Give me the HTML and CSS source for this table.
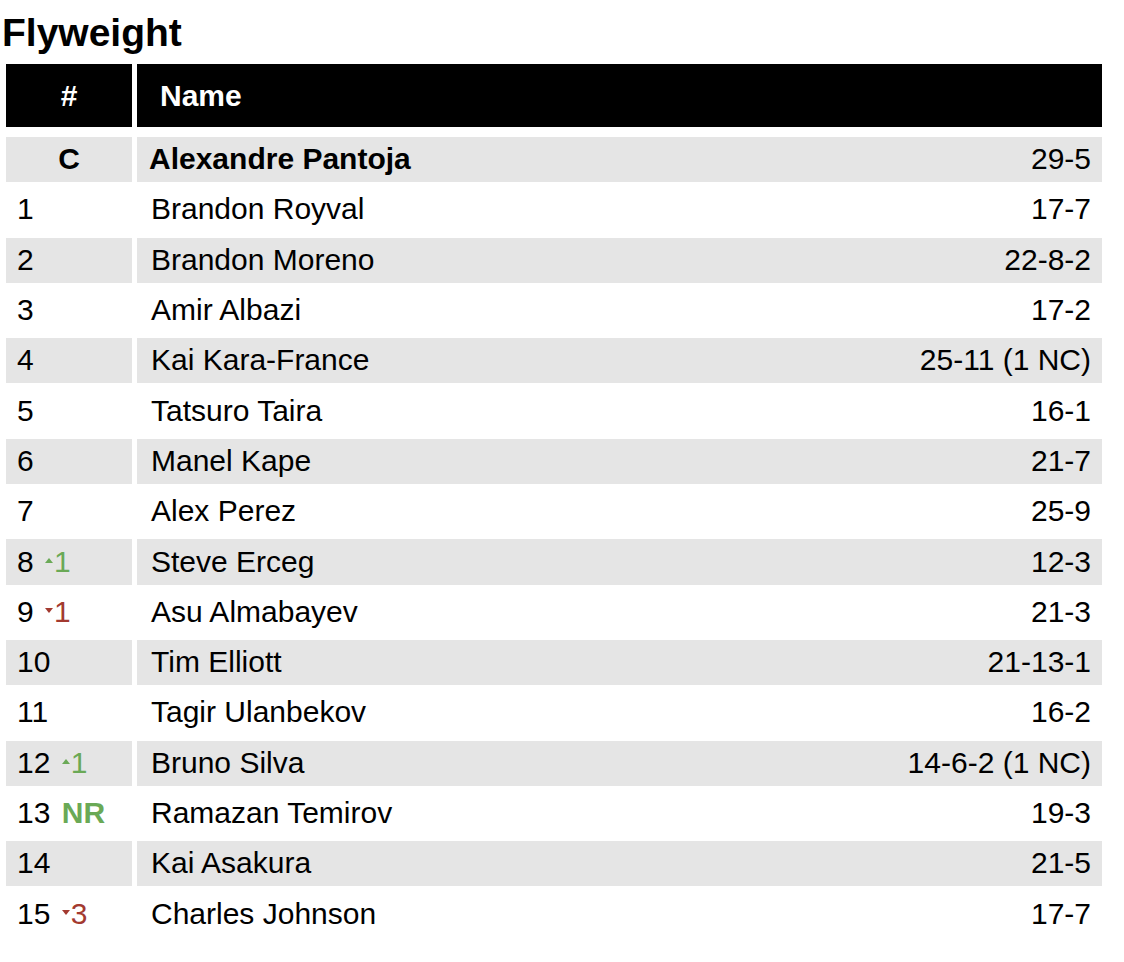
FILE: index.html
```html
<!DOCTYPE html>
<html lang="en">
<head>
<meta charset="utf-8">
<title>Flyweight</title>
<link rel="stylesheet" href="styles.css">
</head>
<body>
<h2 class="title">Flyweight</h2>
<table class="rank">
  <thead>
    <tr><th class="c-rank">#</th><th class="c-name">Name</th></tr>
  </thead>
  <tbody>
    <tr class="odd champ"><td class="c-rank">C</td><td class="c-name"><div class="nr"><span>Alexandre Pantoja</span><span class="rec">29-5</span></div></td></tr>
    <tr><td class="c-rank">1</td><td class="c-name"><div class="nr"><span>Brandon Royval</span><span class="rec">17-7</span></div></td></tr>
    <tr class="odd"><td class="c-rank">2</td><td class="c-name"><div class="nr"><span>Brandon Moreno</span><span class="rec">22-8-2</span></div></td></tr>
    <tr><td class="c-rank">3</td><td class="c-name"><div class="nr"><span>Amir Albazi</span><span class="rec">17-2</span></div></td></tr>
    <tr class="odd"><td class="c-rank">4</td><td class="c-name"><div class="nr"><span>Kai Kara-France</span><span class="rec">25-11 (1 NC)</span></div></td></tr>
    <tr><td class="c-rank">5</td><td class="c-name"><div class="nr"><span>Tatsuro Taira</span><span class="rec">16-1</span></div></td></tr>
    <tr class="odd"><td class="c-rank">6</td><td class="c-name"><div class="nr"><span>Manel Kape</span><span class="rec">21-7</span></div></td></tr>
    <tr><td class="c-rank">7</td><td class="c-name"><div class="nr"><span>Alex Perez</span><span class="rec">25-9</span></div></td></tr>
    <tr class="odd"><td class="c-rank">8 <span class="mv up"><span class="tri"></span>1</span></td><td class="c-name"><div class="nr"><span>Steve Erceg</span><span class="rec">12-3</span></div></td></tr>
    <tr><td class="c-rank">9 <span class="mv down"><span class="tri"></span>1</span></td><td class="c-name"><div class="nr"><span>Asu Almabayev</span><span class="rec">21-3</span></div></td></tr>
    <tr class="odd"><td class="c-rank">10</td><td class="c-name"><div class="nr"><span>Tim Elliott</span><span class="rec">21-13-1</span></div></td></tr>
    <tr><td class="c-rank">11</td><td class="c-name"><div class="nr"><span>Tagir Ulanbekov</span><span class="rec">16-2</span></div></td></tr>
    <tr class="odd"><td class="c-rank">12 <span class="mv up"><span class="tri"></span>1</span></td><td class="c-name"><div class="nr"><span>Bruno Silva</span><span class="rec">14-6-2 (1 NC)</span></div></td></tr>
    <tr><td class="c-rank">13 <span class="nrk">NR</span></td><td class="c-name"><div class="nr"><span>Ramazan Temirov</span><span class="rec">19-3</span></div></td></tr>
    <tr class="odd"><td class="c-rank">14</td><td class="c-name"><div class="nr"><span>Kai Asakura</span><span class="rec">21-5</span></div></td></tr>
    <tr><td class="c-rank">15 <span class="mv down"><span class="tri"></span>3</span></td><td class="c-name"><div class="nr"><span>Charles Johnson</span><span class="rec">17-7</span></div></td></tr>
  </tbody>
</table>
</body>
</html>
```

FILE: styles.css
```css
html, body {
  margin: 0;
  padding: 0;
  background: #fff;
  color: #000;
  font-family: "Liberation Sans", Arial, Helvetica, sans-serif;
}

.title {
  margin: 0;
  padding: 11px 0 0 2px;
  font-size: 39px;
  font-weight: bold;
  line-height: normal;
}

.rank {
  margin: 4px 0 0 1px;
  width: 1106px;
  border-collapse: separate;
  border-spacing: 5px;
  font-size: 30px;
}

.rank th {
  background: #000;
  color: #fff;
  height: 63px;
  padding: 0;
  font-weight: bold;
  border-bottom: 5px solid transparent;
  background-clip: padding-box;
  vertical-align: middle;
}

.rank th.c-rank {
  width: 126px;
  text-align: center;
}

.rank th.c-name {
  text-align: left;
  padding-left: 23px;
}

.rank td {
  height: 44.3px;
  padding: 0 0 1px 0;
  vertical-align: middle;
  white-space: nowrap;
}

.rank td.c-rank {
  width: 115px;
  padding-left: 11px;
  text-align: left;
}

.rank td.c-name {
  padding: 0 11px 1px 14px;
}

.rank tr.odd td {
  background: #e5e5e5;
}

.rank tr.champ td {
  font-weight: bold;
}

.rank tr.champ td.c-rank {
  text-align: center;
  padding-left: 0;
  width: 126px;
}

.rank tr.champ td.c-name {
  padding-left: 12px;
}

.rank tr.champ .rec {
  font-weight: normal;
}

.nr {
  display: flex;
  justify-content: space-between;
  align-items: center;
}

.mv {
  margin-left: 3px;
}

.mv .tri {
  display: inline-block;
  width: 0;
  height: 0;
  border-left: 4.5px solid transparent;
  border-right: 4.5px solid transparent;
  vertical-align: 9px;
  margin-right: 1px;
}

.mv.up {
  color: #6aa956;
}

.mv.up .tri {
  border-bottom: 5px solid #6aa956;
}

.mv.down {
  color: #a33a30;
}

.mv.down .tri {
  border-top: 5px solid #a33a30;
}

.nrk {
  color: #6aa956;
  font-weight: bold;
  margin-left: 3px;
}
```
